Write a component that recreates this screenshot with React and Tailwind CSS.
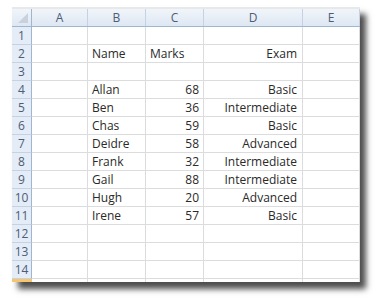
import React from "react";

const cols = ["A", "B", "C", "D", "E"];
const widths = ["w-[56px]", "w-[58px]", "w-[58px]", "w-[99px]", "w-[57px]"];

const data = {
  2: ["", "Name", "Marks", "Exam", ""],
  4: ["", "Allan", "68", "Basic", ""],
  5: ["", "Ben", "36", "Intermediate", ""],
  6: ["", "Chas", "59", "Basic", ""],
  7: ["", "Deidre", "58", "Advanced", ""],
  8: ["", "Frank", "32", "Intermediate", ""],
  9: ["", "Gail", "88", "Intermediate", ""],
  10: ["", "Hugh", "20", "Advanced", ""],
  11: ["", "Irene", "57", "Basic", ""],
};

function cellAlign(r, c) {
  if (c === 2 && r !== 2) return "justify-end pr-[4px]";
  if (c === 3) return "justify-end pr-[5px]";
  return "justify-start pl-[4px]";
}

export default function App() {
  const rows = Array.from({ length: 14 }, (_, i) => i + 1);
  return (
    <div
      className="w-[381px] h-[303px] bg-white pl-[12px] pt-[7px]"
      style={{ fontFamily: "'Open Sans', sans-serif" }}
    >
      <div className="w-[348px] border-t-2 border-[#e6e8ea] shadow-[6px_7px_6px_rgba(0,0,0,0.7)] bg-white">
        <div className="flex h-[18px] bg-gradient-to-b from-[#f1f5fa] to-[#dde7f3] border-b border-[#9eb6ce]">
          <div className="w-[20px] border-r border-[#9eb6ce] relative">
            <div className="absolute right-[3px] bottom-[3px] w-0 h-0 border-l-[10px] border-l-transparent border-b-[10px] border-b-[#c9d2dc]" />
          </div>
          {cols.map((c, i) => (
            <div
              key={c}
              className={`${widths[i]} border-r border-[#c5d2e1] flex items-center justify-center text-[12px] text-[#4d5d73]`}
            >
              {c}
            </div>
          ))}
        </div>
        {rows.map((r) => (
          <div key={r} className="flex h-[18px] border-b border-[#dadcdd]">
            <div className="w-[20px] bg-[#e4ecf7] border-r border-[#9eb6ce] flex items-center justify-center text-[12px] text-[#4d5d73] border-b border-b-[#c5d2e1] -mb-px">
              {r}
            </div>
            {cols.map((c, i) => {
              const v = data[r] ? data[r][i] : "";
              return (
                <div
                  key={c}
                  className={`${widths[i]} border-r border-[#dadcdd] flex items-center ${cellAlign(r, i)} text-[12px] text-[#2a2a2a]`}
                >
                  {v}
                </div>
              );
            })}
          </div>
        ))}
        <div className="flex h-[3px]">
          <div className="w-[20px] bg-[#f8c56c]" />
          {cols.map((c, i) => (
            <div key={c} className={`${widths[i]} border-r border-[#dadcdd]`} />
          ))}
        </div>
      </div>
    </div>
  );
}
